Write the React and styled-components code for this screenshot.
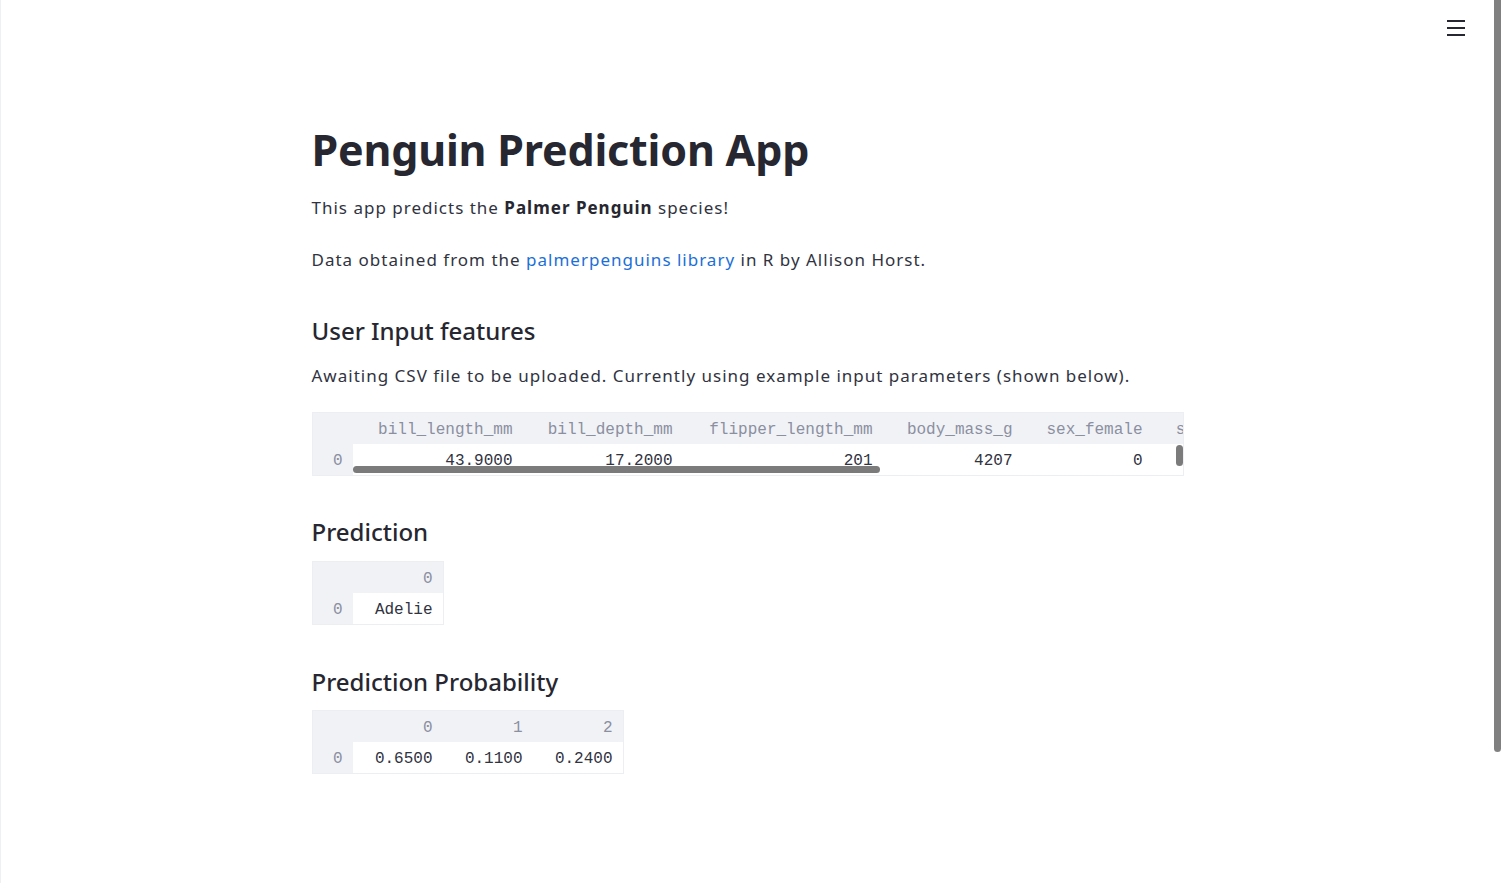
import React from 'react';
import styled, {createGlobalStyle} from 'styled-components';

const GlobalStyle = createGlobalStyle`
  html, body {
    margin: 0;
    padding: 0;
    background: #ffffff;
  }
  body {
    font-family: "Noto Sans", "Open Sans", sans-serif;
    color: #31333f;
    overflow: hidden;
  }
`;

const Page = styled.div`
  min-height: 100vh;
  box-sizing: border-box;
  border-left: 1px solid #eef0f4;
  padding-right: 7px;
`;

const Header = styled.header`
  height: 56px;
  display: flex;
  align-items: center;
  justify-content: flex-end;
  padding-right: 29px;
`;

const MenuButton = styled.button`
  border: none;
  background: transparent;
  padding: 0;
  display: flex;
  cursor: pointer;
`;

const Main = styled.main`
  width: 872px;
  margin: 0 auto;
  padding-top: 68px;
  padding-bottom: 80px;
  display: flex;
  flex-direction: column;
  align-items: flex-start;
`;

const Title = styled.h1`
  margin: 0;
  font-size: 43px;
  line-height: 52px;
  font-weight: 700;
  color: #262730;
  letter-spacing: -0.2px;
`;

const Text = styled.p`
  margin: ${p => p.$top || 0}px 0 0;
  font-size: 17px;
  line-height: 24px;
  font-weight: 400;
  letter-spacing: 1px;
  color: #31333f;

  strong {
    font-weight: 700;
    color: #262730;
  }
`;

const Link = styled.a`
  color: #1c6fd8;
  text-decoration: none;
`;

const Subheader = styled.h3`
  margin: ${p => p.$top}px 0 0;
  font-size: 24px;
  line-height: 32px;
  font-weight: 500;
  color: #262730;
`;

const Frame = styled.div`
  position: relative;
  margin-top: ${p => p.$top}px;
  width: ${p => (p.$width ? `${p.$width}px` : 'auto')};
  box-sizing: border-box;
  border: 1px solid #eceef2;
  overflow: hidden;
`;

const Grid = styled.div`
  display: grid;
  grid-template-columns: ${p => p.$cols};
  grid-auto-rows: 31px;
  font-family: "Liberation Mono", "DejaVu Sans Mono", monospace;
  font-size: 16px;
`;

const Cell = styled.div`
  display: flex;
  align-items: center;
  justify-content: flex-end;
  padding: 2px 10px 0 0;
  white-space: nowrap;
  overflow: hidden;
  background: ${p => (p.$head ? '#f0f2f6' : '#ffffff')};
  color: ${p => (p.$head ? '#8b8fa0' : '#31333f')};
`;

const ScrollThumbX = styled.div`
  position: absolute;
  left: 40px;
  bottom: 2px;
  width: 527px;
  height: 7px;
  border-radius: 4px;
  background: #7b7b7b;
`;

const ScrollThumbY = styled.div`
  position: absolute;
  right: 0;
  top: 32px;
  width: 7px;
  height: 21px;
  border-radius: 4px;
  background: #7b7b7b;
`;

const PageScroll = styled.div`
  position: fixed;
  top: 0;
  right: 0;
  width: 7px;
  height: 752px;
  border-radius: 0 0 4px 4px;
  background: #808080;
`;

const HamburgerIcon = () => (
  <svg width="18" height="16" viewBox="0 0 18 16">
    <rect x="0" y="0" width="18" height="2" fill="#262730"/>
    <rect x="0" y="7" width="18" height="2" fill="#262730"/>
    <rect x="0" y="14" width="18" height="2" fill="#262730"/>
  </svg>
);

const DataFrame = ({widths, columns, rows, top, width, scroll}) => {
  const cols = [40, ...widths].map(w => `${w}px`).join(' ');
  return (
    <Frame $top={top} $width={width}>
      <Grid $cols={cols}>
        <Cell $head/>
        {columns.map(c => <Cell key={c} $head>{c}</Cell>)}
        {rows.map((row, i) => (
          <React.Fragment key={i}>
            <Cell $head>{i}</Cell>
            {row.map((v, j) => <Cell key={j}>{v}</Cell>)}
          </React.Fragment>
        ))}
      </Grid>
      {scroll && <ScrollThumbX/>}
      {scroll && <ScrollThumbY/>}
    </Frame>
  );
};

const inputColumns = ['bill_length_mm', 'bill_depth_mm', 'flipper_length_mm', 'body_mass_g', 'sex_female', 'sex_male'];
const inputRow = ['43.9000', '17.2000', '201', '4207', '0', '1'];

const App = () => {
  return (
    <Page>
      <GlobalStyle/>
      <Header>
        <MenuButton aria-label="menu"><HamburgerIcon/></MenuButton>
      </Header>
      <Main>
        <Title>Penguin Prediction App</Title>
        <Text $top={20}>This app predicts the <strong>Palmer Penguin</strong> species!</Text>
        <Text $top={28}>
          Data obtained from the <Link href="#">palmerpenguins library</Link> in R by Allison Horst.
        </Text>

        <Subheader $top={43}>User Input features</Subheader>
        <Text $top={17}>Awaiting CSV file to be uploaded. Currently using example input parameters (shown below).</Text>
        <DataFrame
          top={24}
          width={872}
          scroll
          widths={[170, 160, 200, 140, 130, 110]}
          columns={inputColumns}
          rows={[inputRow]}
        />

        <Subheader $top={40}>Prediction</Subheader>
        <DataFrame top={13} widths={[90]} columns={['0']} rows={[['Adelie']]}/>

        <Subheader $top={41}>Prediction Probability</Subheader>
        <DataFrame
          top={12}
          widths={[90, 90, 90]}
          columns={['0', '1', '2']}
          rows={[['0.6500', '0.1100', '0.2400']]}
        />
      </Main>
      <PageScroll/>
    </Page>
  );
};

export default App;
